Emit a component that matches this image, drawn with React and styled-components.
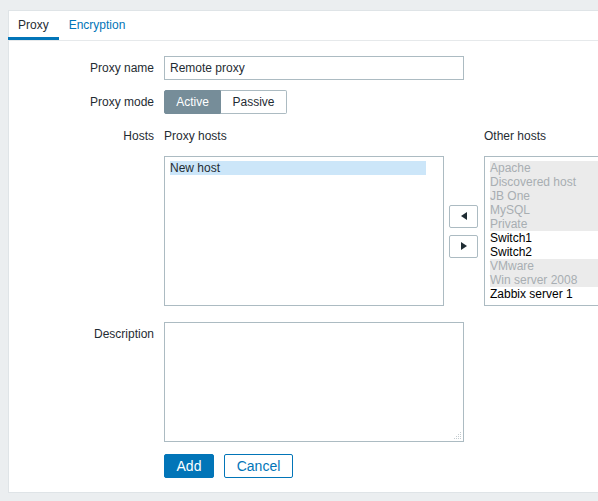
import React from "react";
import styled, { createGlobalStyle } from "styled-components";

const Global = createGlobalStyle`
  html, body { margin: 0; padding: 0; overflow: hidden; }
  body {
    background: #ebeef0;
    font-family: "Liberation Sans", Arial, sans-serif;
    font-size: 12px;
    color: #1f2c33;
  }
`;

const Page = styled.div`
  padding: 10px 0 0 8px;
  height: 501px;
  box-sizing: border-box;
`;

const Panel = styled.div`
  width: 640px;
  background: #fff;
  border: 1px solid #dfe4e7;
  box-sizing: border-box;
`;

const TabBar = styled.div`
  display: flex;
  height: 30px;
  border-bottom: 1px solid #e6e9eb;
  box-sizing: border-box;
  margin-left: -1px;
`;

const Tab = styled.div`
  padding: 0 10px;
  line-height: 26px;
  padding-top: 1px;
  color: ${(p) => (p.$active ? "#1f2c33" : "#0275b8")};
  border-bottom: 3px solid ${(p) => (p.$active ? "#0275b8" : "transparent")};
`;

const Form = styled.div`
  padding: 15px 0 14px;
`;

const Row = styled.div`
  display: grid;
  grid-template-columns: 145px 1fr;
  column-gap: 10px;
  margin-top: ${(p) => p.$mt || 0}px;
`;

const Label = styled.div`
  text-align: right;
  line-height: 14px;
  padding-top: ${(p) => p.$pt || 5}px;
`;

const TextInput = styled.div`
  width: 300px;
  height: 24px;
  border: 1px solid #acbbc2;
  box-sizing: border-box;
  padding: 0 5px;
  line-height: 22px;
`;

const Segmented = styled.div`
  display: flex;
  height: 24px;
`;

const Segment = styled.div`
  box-sizing: border-box;
  height: 24px;
  width: ${(p) => p.$w}px;
  line-height: 22px;
  text-align: center;
  border: 1px solid ${(p) => (p.$active ? "#768d99" : "#acbbc2")};
  background: ${(p) => (p.$active ? "#768d99" : "#fff")};
  color: ${(p) => (p.$active ? "#fff" : "#1f2c33")};
  border-radius: ${(p) => (p.$first ? "2px 0 0 2px" : "0 2px 2px 0")};
  ${(p) => (!p.$first ? "border-left: none;" : "")}
`;

const HostsGrid = styled.div`
  display: grid;
  grid-template-columns: 280px 40px 1fr;
  grid-template-rows: 32px 150px;
`;

const ListHead = styled.div`
  padding-top: 5px;
  line-height: 14px;
`;

const ListBox = styled.div`
  border: 1px solid #acbbc2;
  box-sizing: border-box;
  padding: 4px 17px 4px 5px;
  height: 150px;
  overflow: hidden;
`;

const Option = styled.div`
  line-height: 14px;
  height: 14px;
  white-space: nowrap;
  background: ${(p) => (p.$selected ? "#cce6f9" : p.$disabled ? "#ebebeb" : "transparent")};
  color: ${(p) => (p.$disabled ? "#a8aeb2" : p.$plain ? "#000" : "#1f2c33")};
`;

const ArrowCol = styled.div`
  display: flex;
  flex-direction: column;
  justify-content: center;
  align-items: flex-start;
  gap: 7px;
  padding-left: 5px;
`;

const ArrowButton = styled.div`
  width: 29px;
  height: 23px;
  box-sizing: border-box;
  border: 1px solid #acbbc2;
  border-radius: 2px;
  background: #fff;
  display: flex;
  align-items: center;
  justify-content: center;
`;

const TextArea = styled.div`
  position: relative;
  width: 300px;
  height: 120px;
  border: 1px solid #acbbc2;
  box-sizing: border-box;
`;

const Grip = styled.svg`
  position: absolute;
  right: 1px;
  bottom: 1px;
`;

const Buttons = styled.div`
  display: flex;
  gap: 10px;
`;

const Button = styled.div`
  box-sizing: border-box;
  height: 24px;
  width: ${(p) => p.$w}px;
  text-align: center;
  line-height: 22px;
  font-size: 14px;
  border-radius: 2px;
  border: 1px solid #0275b8;
  background: ${(p) => (p.$primary ? "#0275b8" : "#fff")};
  color: ${(p) => (p.$primary ? "#fff" : "#0275b8")};
`;

const other = [
  ["Apache", true],
  ["Discovered host", true],
  ["JB One", true],
  ["MySQL", true],
  ["Private", true],
  ["Switch1", false],
  ["Switch2", false],
  ["VMware", true],
  ["Win server 2008", true],
  ["Zabbix server 1", false],
];

export default function App() {
  return (
    <Page>
      <Global />
      <Panel>
        <TabBar>
          <Tab $active>Proxy</Tab>
          <Tab>Encryption</Tab>
        </TabBar>
        <Form>
          <Row>
            <Label $pt={5}>Proxy name</Label>
            <TextInput>Remote proxy</TextInput>
          </Row>
          <Row $mt={10}>
            <Label $pt={5}>Proxy mode</Label>
            <Segmented>
              <Segment $first $active $w={57}>Active</Segment>
              <Segment $w={66}>Passive</Segment>
            </Segmented>
          </Row>
          <Row $mt={10}>
            <Label $pt={5}>Hosts</Label>
            <HostsGrid>
              <ListHead>Proxy hosts</ListHead>
              <div />
              <ListHead>Other hosts</ListHead>
              <ListBox>
                <Option $selected>New host</Option>
              </ListBox>
              <ArrowCol>
                <ArrowButton>
                  <svg width="6" height="8" viewBox="0 0 6 8">
                    <path d="M6 0 L0 4 L6 8 Z" fill="#1f2c33" />
                  </svg>
                </ArrowButton>
                <ArrowButton>
                  <svg width="6" height="8" viewBox="0 0 6 8">
                    <path d="M0 0 L6 4 L0 8 Z" fill="#1f2c33" />
                  </svg>
                </ArrowButton>
              </ArrowCol>
              <ListBox>
                {other.map(([n, d]) => (
                  <Option key={n} $disabled={d} $plain={!d}>
                    {n}
                  </Option>
                ))}
              </ListBox>
            </HostsGrid>
          </Row>
          <Row $mt={16}>
            <Label $pt={5}>Description</Label>
            <TextArea>
              <Grip width="9" height="9" viewBox="0 0 9 9">
                <g fill="#c4ccd0">
                  <rect x="7" y="1" width="1" height="1" />
                  <rect x="7" y="3" width="1" height="1" />
                  <rect x="5" y="3" width="1" height="1" />
                  <rect x="7" y="5" width="1" height="1" />
                  <rect x="5" y="5" width="1" height="1" />
                  <rect x="3" y="5" width="1" height="1" />
                  <rect x="7" y="7" width="1" height="1" />
                  <rect x="5" y="7" width="1" height="1" />
                  <rect x="3" y="7" width="1" height="1" />
                  <rect x="1" y="7" width="1" height="1" />
                </g>
              </Grip>
            </TextArea>
          </Row>
          <Row $mt={12}>
            <div />
            <Buttons>
              <Button $primary $w={50}>Add</Button>
              <Button $w={69}>Cancel</Button>
            </Buttons>
          </Row>
        </Form>
      </Panel>
    </Page>
  );
}
